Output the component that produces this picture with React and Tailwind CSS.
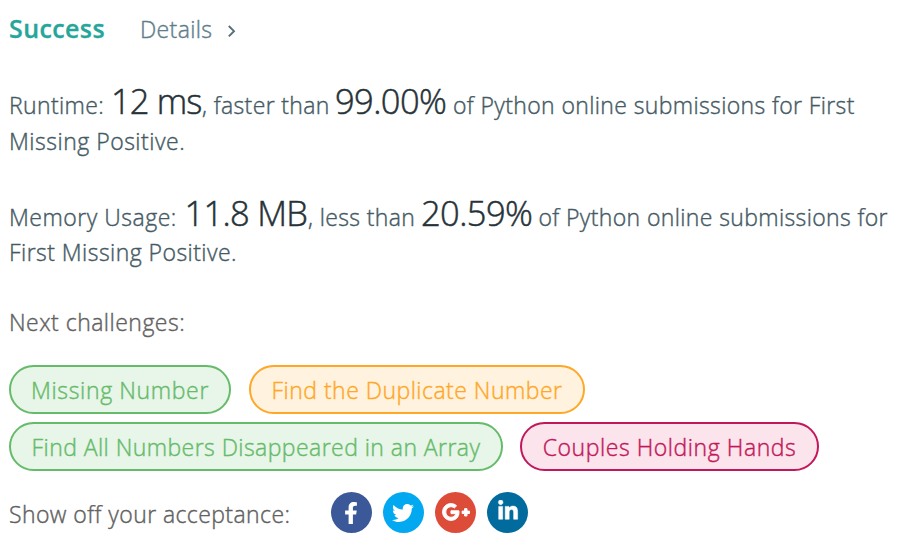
import { FaFacebookF, FaTwitter, FaGooglePlusG, FaLinkedinIn } from 'react-icons/fa';

const big = "inline-block shrink-0 text-[34.5px] leading-[0] text-[#263238] [-webkit-text-stroke:0.5px] ";

function Pill({ className, children }) {
  return (
    <a className={'flex items-center justify-center whitespace-nowrap rounded-full border-2 ' + className}>
      {children}
    </a>
  );
}

function Share({ className, children }) {
  return (
    <a className={'flex size-[41px] items-center justify-center rounded-full text-white ' + className}>
      {children}
    </a>
  );
}

export default function App() {
  return (
    <div className="h-[553px] w-[924px] overflow-hidden bg-white pl-[9px] font-['Open_Sans','Noto_Sans',sans-serif] text-[23px] font-light leading-9 tracking-[0.37px] text-[#455a64] [-webkit-text-stroke:0.4px]">
      <header className="flex h-[87px] items-baseline pt-[10px]">
        <h3 className="w-[131px] text-[25px] font-semibold tracking-[0.4px] text-[#26a69a] [-webkit-text-stroke:0.3px]">Success</h3>
        <a className="w-[87px] text-[#607d8b]">Details</a>
        <svg className="text-[#546e7a]" width="9" height="13" viewBox="0 0 9 13" fill="none" stroke="currentColor" strokeWidth="1.9">
          <path d="M1.8 1 7 6.2 1.8 11.4" />
        </svg>
      </header>

      <section className="h-28 whitespace-nowrap">
        <div className="flex h-9 items-baseline">
          <span className="w-[102px] shrink-0">Runtime:</span>
          <span className={big + 'w-[91px] tracking-[-0.9px]'}>12 ms</span>
          <span className="w-[133px] shrink-0">, faster than</span>
          <span className={big + 'w-[118px] tracking-[-0.6px]'}>99.00%</span>
          <span>of Python online submissions for First</span>
        </div>
        <div className="tracking-[0.5px]">Missing Positive.</div>
      </section>

      <section className="h-[105px] whitespace-nowrap">
        <div className="flex h-[35px] items-baseline">
          <span className="w-[175.5px] shrink-0 tracking-[0.5px]">Memory Usage:</span>
          <span className={big + 'w-[123.5px] tracking-[-0.7px]'}>11.8 MB</span>
          <span className="w-[113px] shrink-0">, less than</span>
          <span className={big + 'w-[117.5px] tracking-[-0.6px]'}>20.59%</span>
          <span>of Python online submissions for</span>
        </div>
        <div className="tracking-[0.45px]">First Missing Positive.</div>
      </section>

      <section>
        <div className="h-[61px] tracking-[0.48px] text-[#616161]">Next challenges:</div>
        <div className="flex h-[49px] gap-[18px]">
          <Pill className="w-[222px] border-[#66bb6a] bg-[#e8f5e9] tracking-[0.65px] text-[#66bb6a]">Missing Number</Pill>
          <Pill className="w-[336px] border-[#ffa726] bg-[#fff3e0] tracking-[0.48px] text-[#ffa726]">Find the Duplicate Number</Pill>
        </div>
        <div className="mt-2 flex h-[49px] gap-[17px]">
          <Pill className="w-[494px] border-[#66bb6a] bg-[#e8f5e9] tracking-[0.44px] text-[#66bb6a]">Find All Numbers Disappeared in an Array</Pill>
          <Pill className="w-[299px] border-[#c2185b] bg-[#fce4ec] tracking-[0.56px] text-[#c2185b]">Couples Holding Hands</Pill>
        </div>
      </section>

      <footer className="mt-[21px] flex h-[41px]">
        <span className="mt-[4px] w-[321.5px] tracking-[0.42px] text-[#616161]">Show off your acceptance:</span>
        <div className="flex gap-[11.3px]">
          <Share className="bg-[#3b5998]"><FaFacebookF size={22} /></Share>
          <Share className="bg-[#03a9f0]"><FaTwitter size={22} /></Share>
          <Share className="bg-[#dd4b39]"><FaGooglePlusG size={28} className="-mt-0.5 [stroke:white] [stroke-width:22px]" /></Share>
          <Share className="bg-[#006b9c]"><FaLinkedinIn size={22} className="-mt-1 [stroke:white] [stroke-width:12px]" /></Share>
        </div>
      </footer>
    </div>
  );
}
